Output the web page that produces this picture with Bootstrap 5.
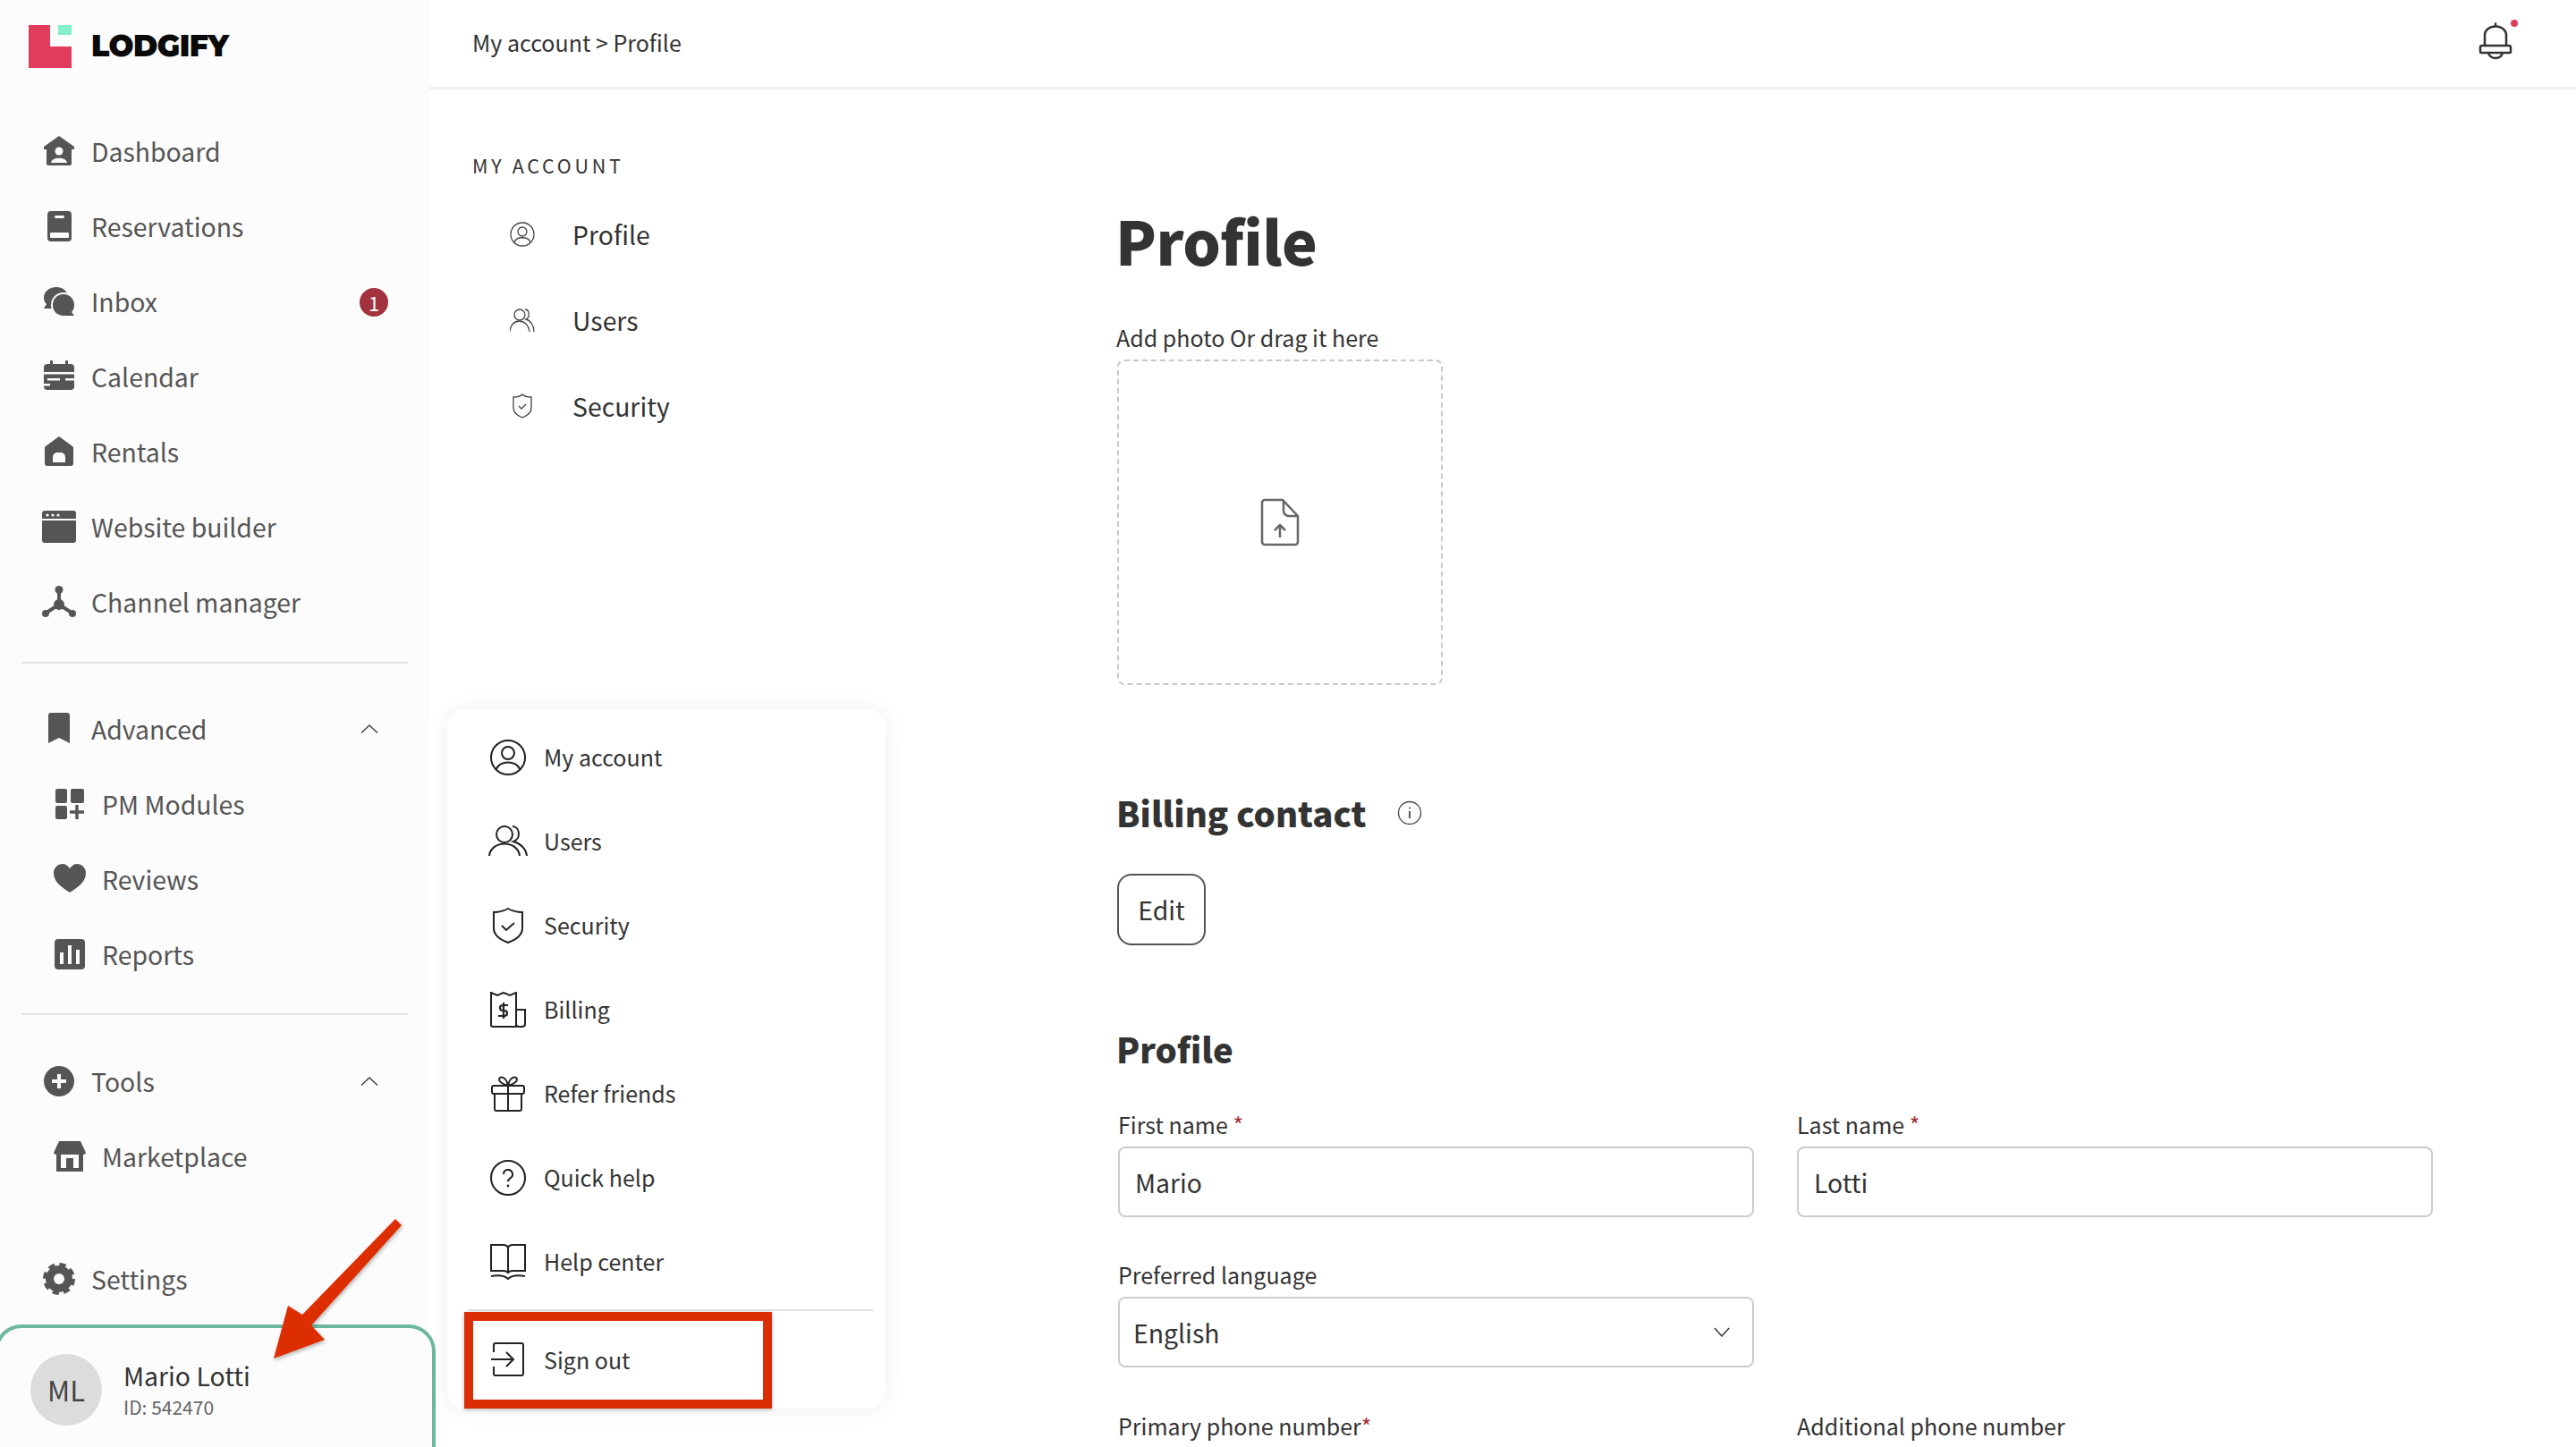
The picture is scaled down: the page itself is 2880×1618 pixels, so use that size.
<!DOCTYPE html>
<html lang="en">
<head>
<meta charset="utf-8">
<title>Lodgify - Profile</title>
<link rel="stylesheet" href="https://cdn.jsdelivr.net/npm/bootstrap@5.3.0/dist/css/bootstrap.min.css">
<style>
html,body{height:1618px;overflow:hidden}
body{font-family:"Noto Sans CJK JP","Noto Sans",sans-serif;color:#333;background:#fff;position:relative;font-size:28.4px;line-height:40px}
.side{width:480px;height:1618px;flex:none;background:#fcfcfc;position:relative;padding-left:24px;padding-right:24px}
.logo-row{height:127px;margin-left:-24px}
.logo-mark{margin-left:32px;margin-top:28px;display:block}
.logo-word{font-family:"Montserrat","Inter",sans-serif;font-weight:900;font-size:33px;line-height:40px;color:#0a0a0a;position:relative;left:22px;top:31px;letter-spacing:-.5px;height:40px}
.side-item{height:84px;display:flex;align-items:center;color:#555;font-size:28.4px;text-decoration:none}
.side-item .ic{width:36px;height:36px;margin-left:24px;margin-right:18px;flex:none;fill:#555}
.side-item.sub .ic{margin-left:36px;margin-right:18px}
.side-rule{border:0;border-top:2px solid #e2e2e2;opacity:1;margin:25px 0 31px}
.side-rule.rule2{margin:24px 0 32px}
.tip{margin-left:auto;margin-right:22px;margin-top:2px;width:32px;height:32px;border-radius:50%;background:#a3323f;color:#fff;font-size:22px;line-height:32px;text-align:center}
.chev{margin-left:auto;margin-right:33px;width:20px;height:10px;flex:none}
.gap-settings{height:53px}
.me-box{margin-top:9px;margin-left:-30px;width:493px;height:170px;border:4px solid #6db89c;border-radius:30px;display:flex;align-items:flex-start;padding:29px 0 0 36px;background:#fcfcfc}
.me-av{width:80px;height:80px;border-radius:50%;background:#dcdcdc;color:#444;font-size:31px;line-height:80px;text-align:center;flex:none}
.me-name{margin-left:24px;color:#333;font-size:28.4px;line-height:36px;padding-top:6px}
.me-id{font-size:21px;line-height:28px;color:#666;margin-top:3px}
.main{flex:1 1 auto;min-width:0}
.top{padding:0 48px;box-sizing:content-box;height:97px;border-bottom:3px solid #f1f1f1;align-items:center}
.crumb{font-size:25px;line-height:36px;margin-top:-4px}
.bell{position:relative;width:44px;height:44px;margin-right:18px;margin-top:-4px}
.sec{width:769px;flex:none;padding:69px 0 0 48px}
.sec-h{font-size:21.500px;line-height:32px;letter-spacing:3.700px;color:#333;margin-bottom:13px}
.sec-item{height:96px;display:flex;align-items:center;font-size:28.4px;color:#333;text-decoration:none}
.sec-item svg{margin-left:42px;margin-right:42px;flex:none}
.cont{flex:1 1 auto;min-width:0}
.pg-title{font-size:67px;line-height:96px;font-weight:900;margin:0 0 0 -2px;padding-top:120px;color:#333;letter-spacing:-.5px}
.lab{font-size:25px;line-height:36px;color:#333;margin-bottom:0}
.lab-photo{margin-top:43px;margin-left:-1px}
.drop{width:364px;height:364px;border:2px dashed #c8c8c8;border-radius:8px;margin-top:7px}
.hd2{font-size:38.300px;line-height:56px;font-weight:900;color:#333;margin:0 0 0 -1px}
.billing-row{margin-top:115px}
.info-ic{margin-left:34px}
.btn-edit{width:99px;height:80px;border:2px solid #555;border-radius:16px;font-size:28.4px;line-height:40px;color:#333;padding:0;background:#fff;margin-top:40px;display:block}
.profile-h{margin-top:88px}
.form-wrap{--bs-gutter-x:48px;--bs-gutter-y:0;width:1518px;margin-left:-23px;margin-right:0}
.form-first{margin-top:38px}
.field-gap{margin-top:46px}
.field-last{margin-top:47px}
.req{color:#a3323f}
.lab-in{display:block;margin-bottom:7px}
.form-control.inp,.form-select.inp{height:79px;border:2px solid #ccc;border-radius:8px;font-size:28.4px;line-height:40px;color:#333;padding:0 17px;box-shadow:none}
.form-select.inp{padding-left:15px;background-size:18px 11px;background-position:right 25px center;background-image:url("data:image/svg+xml,%3csvg xmlns='http://www.w3.org/2000/svg' viewBox='0 0 20 12'%3e%3cpath fill='none' stroke='%23333' stroke-width='1.6' d='M1 1l9 10 9-10'/%3e%3c/svg%3e")}
.pop{position:absolute;left:500px;top:793px;width:490px;height:782px;background:#fff;border-radius:20px;box-shadow:0 0 24px rgba(0,0,0,.07);padding:7px 0 0 0}
.pop-item{height:94px;display:flex;align-items:center;font-size:25px;color:#333;text-decoration:none;padding-bottom:2px}
.pop-item svg{margin-left:48px;margin-right:20px;flex:none;margin-top:2px}
.pop-rule{border:0;border-top:2px solid #e2e2e2;opacity:1;margin:6px 14px 0 24px}
.pop-out{height:108px;padding-bottom:0}
.pop-out svg{margin-top:0}
.redbox{position:absolute;left:519px;top:1467px;width:344px;height:108px;border:10px solid #dc2e06;box-shadow:0 1px 4px rgba(0,0,0,.3)}
.anno{position:absolute;left:0;top:0;pointer-events:none}
</style>
</head>
<body>
<div class="d-flex">
  <aside class="side">
    <div class="logo-row d-flex">
      <svg class="logo-mark" width="48" height="48" viewBox="0 0 48 48"><path fill="#e03c5c" d="M0 0H24V24H48V48H0Z"/><rect x="33" y="0" width="15" height="11" fill="#85efc8"/></svg>
      <div class="logo-word">LODGIFY</div>
    </div>
    <a class="side-item"><svg class="ic" viewBox="0 0 36 36"><path d="M18 1 35 13v3h-3v16a2 2 0 0 1-2 2H6a2 2 0 0 1-2-2V16H1v-3Z"/><circle cx="18" cy="18" r="4.500" fill="#fcfcfc"/><path d="M9 31c1-7 17-7 18 0Z" fill="#fcfcfc"/></svg>Dashboard</a>
    <a class="side-item"><svg class="ic" viewBox="0 0 36 36"><rect x="5" y="1" width="27" height="34" rx="4"/><rect x="13" y="6" width="11" height="3" rx="1.500" fill="#fcfcfc"/><rect x="8" y="25" width="21" height="6" rx="1" fill="#fcfcfc"/></svg>Reservations</a>
    <a class="side-item"><svg class="ic" viewBox="0 0 36 36"><path d="M15 2C7 2 1 7 1 14c0 3 1 5 3 7l-3 5h8c2 1 4 1 6 1 8 0 13-6 13-13S23 2 15 2Z"/><circle cx="23" cy="22" r="14" fill="#fcfcfc"/><path d="M23 10c-7 0-12 5-12 12s5 12 12 12h12l-3-4c2-2 3-5 3-8 0-7-5-12-12-12Z"/></svg>Inbox<span class="tip">1</span></a>
    <a class="side-item"><svg class="ic" viewBox="0 0 36 36"><rect x="1" y="4" width="34" height="29" rx="4"/><rect x="8" y="0" width="3" height="7" rx="1"/><rect x="25" y="0" width="3" height="7" rx="1"/><rect x="0" y="13" width="36" height="2.500" fill="#fcfcfc"/><rect x="5" y="20" width="14" height="2.500" fill="#fcfcfc"/><rect x="25" y="20" width="11" height="2.500" fill="#fcfcfc"/><rect x="0" y="26" width="8" height="2.500" fill="#fcfcfc"/></svg>Calendar</a>
    <a class="side-item"><svg class="ic" viewBox="0 0 36 36"><path d="M18 1 33 12a2 2 0 0 1 1 2v17a3 3 0 0 1-3 3H5a3 3 0 0 1-3-3V14a2 2 0 0 1 1-2Z"/><path d="M11 30V24a5 5 0 0 1 5-5h4a5 5 0 0 1 5 5v6Z" fill="#fcfcfc"/></svg>Rentals</a>
    <a class="side-item"><svg class="ic" viewBox="0 0 36 36" style="overflow:visible"><rect x="-1" y="0" width="38" height="36" rx="3"/><rect x="-1" y="9" width="38" height="2" fill="#fcfcfc"/><circle cx="5" cy="5" r="1.600" fill="#fcfcfc"/><circle cx="11" cy="5" r="1.600" fill="#fcfcfc"/><circle cx="17" cy="5" r="1.600" fill="#fcfcfc"/></svg>Website builder</a>
    <a class="side-item"><svg class="ic" viewBox="0 0 36 36" style="overflow:visible"><path d="M18 6v15L4 30m14-9 14 9" stroke="#555" stroke-width="4" fill="none"/><circle cx="18" cy="4.500" r="4.500"/><circle cx="18" cy="21" r="6"/><circle cx="3" cy="31" r="4"/><circle cx="33" cy="31" r="4"/></svg>Channel manager</a>
    <hr class="side-rule">
    <a class="side-item"><svg class="ic" viewBox="0 0 36 36"><path d="M6 3a3 3 0 0 1 3-3h18a3 3 0 0 1 3 3v31l-12-6-12 6a2 2 0 0 1 0-1Z"/></svg>Advanced<svg class="chev" viewBox="0 0 20 10"><path d="M1 9.500 10 1l9 8.500" fill="none" stroke="#444" stroke-width="1.500"/></svg></a>
    <a class="side-item sub"><svg class="ic" viewBox="0 0 36 36"><rect x="2" y="1" width="13" height="16" rx="2"/><rect x="19" y="1" width="15" height="16" rx="2"/><rect x="2" y="20" width="13" height="15" rx="2"/><path d="M26 19v16M18 27h16" stroke="#555" stroke-width="3.500"/></svg>PM Modules</a>
    <a class="side-item sub"><svg class="ic" viewBox="0 0 36 36"><path d="M18 33C6 25 0 20 0 11 0 5 5 1 10 1c3 0 6 2 8 5 2-3 5-5 8-5 5 0 10 4 10 10 0 9-6 14-18 22Z"/></svg>Reviews</a>
    <a class="side-item sub"><svg class="ic" viewBox="0 0 36 36"><rect x="1" y="1" width="34" height="34" rx="4"/><rect x="7" y="16" width="4" height="13" fill="#fcfcfc"/><rect x="16" y="8" width="4" height="21" fill="#fcfcfc"/><rect x="25" y="13" width="4" height="16" fill="#fcfcfc"/></svg>Reports</a>
    <hr class="side-rule rule2">
    <a class="side-item"><svg class="ic" viewBox="0 0 36 36"><circle cx="18" cy="18" r="17"/><path d="M18 10v16M10 18h16" stroke="#fcfcfc" stroke-width="4"/></svg>Tools<svg class="chev" viewBox="0 0 20 10"><path d="M1 9.500 10 1l9 8.500" fill="none" stroke="#444" stroke-width="1.500"/></svg></a>
    <a class="side-item sub"><svg class="ic" viewBox="0 0 36 36"><path d="M6 1h24l6 13a3 3 0 0 1-3 2v19H3V16a3 3 0 0 1-3-2Z"/><rect x="8" y="16" width="20" height="15" fill="#fcfcfc"/><rect x="14" y="20" width="8" height="11"/></svg>Marketplace</a>
    <div class="gap-settings"></div>
    <a class="side-item"><svg class="ic" viewBox="0 0 36 36"><circle cx="18" cy="18" r="15"/><circle cx="18" cy="18" r="15.500" fill="none" stroke="#555" stroke-width="5" stroke-dasharray="7 5.170"/><circle cx="18" cy="18" r="6" fill="#fcfcfc"/></svg>Settings</a>
    <div class="me-box">
      <div class="me-av">ML</div>
      <div class="me-name"><div>Mario Lotti</div><div class="me-id">ID: 542470</div></div>
    </div>
  </aside>

  <div class="main">
    <header class="top d-flex justify-content-between">
      <div class="crumb">My account &gt; Profile</div>
      <svg class="bell" viewBox="0 0 44 44" style="overflow:visible"><g fill="none" stroke="#333" stroke-width="2.500"><path d="M20 5V0.500"/><path d="M8 26V14a12 9.500 0 0 1 24 0v12"/><path d="M5 26h30a2 2 0 0 1 2 2v5a1 1 0 0 1-1 1H4a1 1 0 0 1-1-1v-5a2 2 0 0 1 2-2Z"/><path d="M12 34c1 4 4 6 8 6s7-2 8-6"/></g><circle cx="41" cy="1" r="4" fill="#e03c5c"/></svg>
    </header>
    <div class="d-flex">
      <nav class="sec">
        <div class="sec-h">MY ACCOUNT</div>
        <a class="sec-item"><svg width="28" height="28" viewBox="0 0 28 28" fill="none" stroke="#444" stroke-width="1.300"><circle cx="14" cy="14" r="13"/><circle cx="14" cy="11" r="5"/><path d="M5 23c2-7 16-7 18 0"/></svg>Profile</a>
        <a class="sec-item"><svg width="28" height="28" viewBox="0 0 28 28" fill="none" stroke="#444" stroke-width="1.300"><circle cx="11" cy="8" r="6"/><path d="M0 27c1-16 20-16 22 0"/><path d="M17 2c5 0 6 9 1 11 5 1 9 7 9 14"/></svg>Users</a>
        <a class="sec-item"><svg width="28" height="28" viewBox="0 0 28 28" fill="none" stroke="#444" stroke-width="1.300"><path d="M14 1c3 3 6 3 10 3v12c0 6-5 9-10 11C9 25 4 22 4 16V4c4 0 7 0 10-3Z"/><path d="M10 14l3 3 5-5"/></svg>Security</a>
      </nav>
      <main class="cont">
        <h1 class="pg-title">Profile</h1>
        <div class="lab lab-photo">Add photo Or drag it here</div>
        <div class="drop d-flex align-items-center justify-content-center">
          <svg width="44" height="54" viewBox="0 0 44 54" fill="none" stroke="#666" stroke-width="2.500"><path d="M5 2h20l17 18v29a3 3 0 0 1-3 3H5a3 3 0 0 1-3-3V5a3 3 0 0 1 3-3Z"/><path d="M26 2v12a6 6 0 0 0 6 6h10"/><path d="M22 44V30m-6 6 6-6 6 6"/></svg>
        </div>
        <div class="billing-row d-flex align-items-center">
          <h2 class="hd2">Billing contact</h2>
          <svg class="info-ic" width="28" height="28" viewBox="0 0 28 28" fill="none" stroke="#444" stroke-width="1.300"><circle cx="14" cy="14" r="12.500"/><path d="M14 12v8" stroke-width="1.800"/><circle cx="14" cy="8.500" r="1" fill="#444" stroke="none"/></svg>
        </div>
        <button type="button" class="btn btn-edit">Edit</button>
        <h2 class="hd2 profile-h">Profile</h2>
        <div class="row form-wrap form-first">
          <div class="col-6"><label class="lab lab-in">First name<span class="req"> *</span></label><input class="form-control inp" value="Mario"></div>
          <div class="col-6"><label class="lab lab-in">Last name<span class="req"> *</span></label><input class="form-control inp" value="Lotti"></div>
        </div>
        <div class="row form-wrap field-gap">
          <div class="col-6"><label class="lab lab-in">Preferred language</label><select class="form-select inp"><option>English</option></select></div>
        </div>
        <div class="row form-wrap field-last">
          <div class="col-6"><label class="lab lab-in">Primary phone number<span class="req">*</span></label></div>
          <div class="col-6"><label class="lab lab-in">Additional phone number</label></div>
        </div>
      </main>
    </div>
  </div>
</div>

<div class="pop">
  <a class="pop-item"><svg width="40" height="40" viewBox="0 0 40 40" fill="none" stroke="#222" stroke-width="2"><circle cx="20" cy="20" r="19"/><circle cx="20" cy="15" r="7"/><path d="M7 33c3-10 23-10 26 0"/></svg>My account</a>
  <a class="pop-item"><svg width="44" height="40" viewBox="0 0 44 40" fill="none" stroke="#222" stroke-width="2" style="margin-left:46px;margin-right:18px"><circle cx="18" cy="12" r="9"/><path d="M1 36c2-18 32-18 34 0"/><path d="M27 3c8 0 10 14 1 17 8 2 14 8 15 16"/></svg>Users</a>
  <a class="pop-item"><svg width="40" height="40" viewBox="0 0 40 40" fill="none" stroke="#222" stroke-width="2"><path d="M20 1c5 3 10 4 16 4v18c0 8-8 13-16 16C12 36 4 31 4 23V5c6 0 11-1 16-4Z"/><path d="M13 20l5 5 9-8"/></svg>Security</a>
  <a class="pop-item"><svg width="40" height="40" viewBox="0 0 40 40" fill="none" stroke="#222" stroke-width="2"><path d="M1 1l7 3 7-3 7 3 7-3v38H3a2 2 0 0 1-2-2Z"/><path d="M29 20h10v16a3 3 0 0 1-3 3h-4a3 3 0 0 1-3-3"/><path d="M20 15h-6a3 3 0 0 0 0 6h2a3 3 0 0 1 0 6H9M15 12v18" stroke-width="2.200"/></svg>Billing</a>
  <a class="pop-item"><svg width="40" height="40" viewBox="0 0 40 40" fill="none" stroke="#222" stroke-width="2"><rect x="2" y="11" width="36" height="9" rx="2"/><path d="M5 20v17a2 2 0 0 0 2 2h26a2 2 0 0 0 2-2V20M20 11v28"/><path d="M20 11c-3-1-10-3-10-7 0-4 8-4 10 7Zm0 0c3-1 10-3 10-7 0-4-8-4-10 7Z"/></svg>Refer friends</a>
  <a class="pop-item"><svg width="40" height="40" viewBox="0 0 40 40" fill="none" stroke="#222" stroke-width="2"><circle cx="20" cy="20" r="19"/><path d="M15 16a5 5 0 1 1 7.500 4.300c-1.500 1-2.500 1.700-2.500 4"/><circle cx="20" cy="29" r="1.400" fill="#222" stroke="none"/></svg>Quick help</a>
  <a class="pop-item"><svg width="40" height="40" viewBox="0 0 40 40" fill="none" stroke="#222" stroke-width="2"><path d="M1 1h13c3 0 6 1 6 4v28c0-2-3-3-6-3H1ZM39 1H26c-3 0-6 1-6 4v28c0-2 3-3 6-3h13Z"/><path d="M1 36c6-1 15-1 19 3 4-4 13-4 19-3"/></svg>Help center</a>
  <hr class="pop-rule">
  <a class="pop-item pop-out"><svg width="40" height="40" viewBox="0 0 40 40" fill="none" stroke="#222" stroke-width="2"><path d="M4 12V4a2 2 0 0 1 2-2h29a2 2 0 0 1 2 2v32a2 2 0 0 1-2 2H6a2 2 0 0 1-2-2v-8"/><path d="M1 20h25m-8-8 8 8-8 8"/></svg>Sign out</a>
</div>
<div class="redbox"></div>
<svg class="anno" width="2880" height="1618" viewBox="0 0 2880 1618"><defs><filter id="sh"><feDropShadow dx="1" dy="2" stdDeviation="2" flood-opacity=".3"/></filter></defs><polygon filter="url(#sh)" fill="#dc2e06" points="306,1519 322,1460 338,1470 442,1363 449,1370 348,1482 363,1498"/></svg>
<script src="https://cdn.jsdelivr.net/npm/bootstrap@5.3.0/dist/js/bootstrap.bundle.min.js"></script>
</body>
</html>
